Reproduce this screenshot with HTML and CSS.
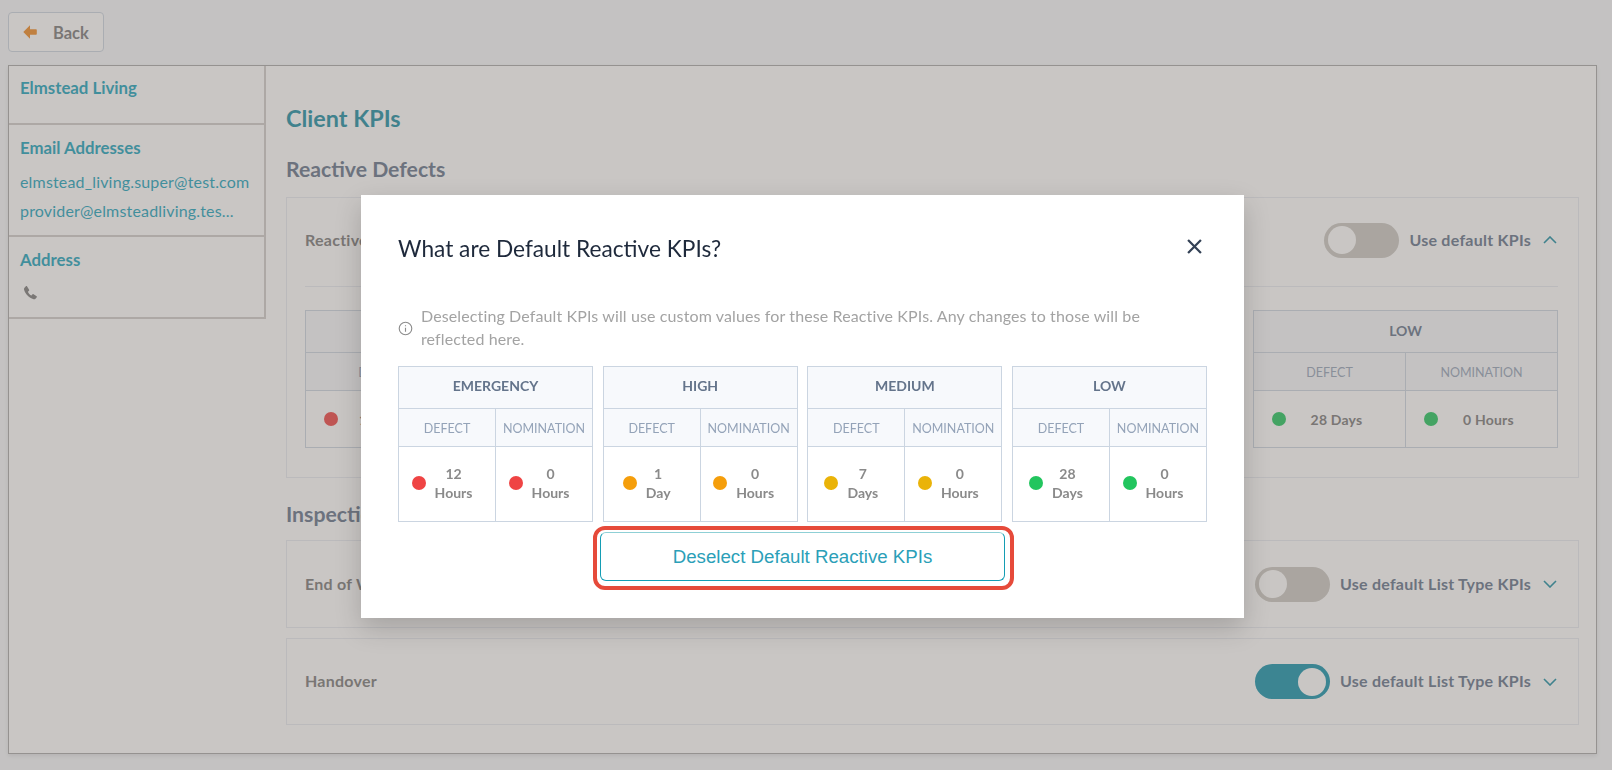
FILE: index.html
```html
<!DOCTYPE html>
<html lang="en">
<head>
<meta charset="utf-8">
<title>Client KPIs</title>
<link rel="stylesheet" href="styles.css">
</head>
<body>
<div class="page">
  <button class="back"><svg class="back-icon" viewBox="0 0 14 14"><path d="M7 0.3 L0.3 7 L7 13.7 V9.8 H12.8 C13.4 9.8 13.8 9.4 13.8 8.8 V5.2 C13.8 4.6 13.4 4.2 12.8 4.2 H7 Z"/></svg><span>Back</span></button>
  <div class="panel">
    <aside class="side">
      <section class="side-sec s1"><h3>Elmstead Living</h3></section>
      <section class="side-sec s2">
        <h3>Email Addresses</h3>
        <a class="mail">elmstead_living.super@test.com</a>
        <a class="mail">provider@elmsteadliving.tes...</a>
      </section>
      <section class="side-sec s3">
        <h3>Address</h3>
        <svg class="phone" viewBox="0 0 24 24"><path d="M6.6 2.2 L9.8 7.4 C10.2 8 10 8.7 9.5 9.2 L7.9 10.6 C8.8 13.3 10.9 15.6 13.5 16.6 L15 15 C15.5 14.5 16.2 14.3 16.9 14.7 L21.8 17.8 C22.4 18.2 22.5 19 22 19.6 L20 21.8 C19.2 22.6 18 22.9 16.9 22.6 C9.6 20.6 3.6 14.5 1.6 7.3 C1.3 6.2 1.6 5 2.4 4.2 L4.6 2.1 C5.2 1.5 6.2 1.6 6.6 2.2 Z"/></svg>
      </section>
    </aside>
    <main class="main">
      <h1>Client KPIs</h1>
      <h2>Reactive Defects</h2>
      <div class="card open">
        <div class="card-head">
          <span class="card-name">Reactive Defects</span>
          <span class="toggle"><i></i></span>
          <span class="use">Use default KPIs</span>
          <svg class="chev" viewBox="0 0 14 8"><path d="M1 7 L7 1 L13 7"/></svg>
        </div>
        <div class="bg-tables">
          <div class="btable"><div class="bt-h">EMERGENCY</div><div class="bt-sub"><span>DEFECT</span><span>NOMINATION</span></div><div class="bt-body"><span><b class="dot red"></b><em>12 Hours</em></span><span><b class="dot red"></b><em>0 Hours</em></span></div></div>
          <div class="btable"><div class="bt-h">HIGH</div><div class="bt-sub"><span>DEFECT</span><span>NOMINATION</span></div><div class="bt-body"><span><b class="dot orange"></b><em>1 Day</em></span><span><b class="dot orange"></b><em>0 Hours</em></span></div></div>
          <div class="btable"><div class="bt-h">MEDIUM</div><div class="bt-sub"><span>DEFECT</span><span>NOMINATION</span></div><div class="bt-body"><span><b class="dot yellow"></b><em>7 Days</em></span><span><b class="dot yellow"></b><em>0 Hours</em></span></div></div>
          <div class="btable"><div class="bt-h">LOW</div><div class="bt-sub"><span>DEFECT</span><span>NOMINATION</span></div><div class="bt-body"><span><b class="dot green"></b><em>28 Days</em></span><span><b class="dot green"></b><em>0 Hours</em></span></div></div>
        </div>
      </div>
      <h2 class="h2b">Inspection Defects</h2>
      <div class="card c2">
        <div class="card-head">
          <span class="card-name">End of Works</span>
          <span class="toggle"><i></i></span>
          <span class="use">Use default List Type KPIs</span>
          <svg class="chev" viewBox="0 0 14 8"><path d="M1 1 L7 7 L13 1"/></svg>
        </div>
      </div>
      <div class="card c3">
        <div class="card-head">
          <span class="card-name">Handover</span>
          <span class="toggle on"><i></i></span>
          <span class="use">Use default List Type KPIs</span>
          <svg class="chev" viewBox="0 0 14 8"><path d="M1 1 L7 7 L13 1"/></svg>
        </div>
      </div>
    </main>
  </div>
</div>

<div class="overlay"></div>
<div class="modal">
  <div class="modal-head">
    <h4>What are Default Reactive KPIs?</h4>
    <svg class="close" viewBox="0 0 14 14"><path d="M1 1 L13 13 M13 1 L1 13"/></svg>
  </div>
  <div class="info">
    <svg class="info-icon" viewBox="0 0 16 16"><circle cx="8" cy="8" r="6.7"/><path d="M8 7.2 V11.4 M8 4.6 V5.6"/></svg>
    <p>Deselecting Default KPIs will use custom values for these Reactive KPIs. Any changes to those will be reflected here.</p>
  </div>
  <div class="tables">
    <div class="mt">
      <div class="mt-h">EMERGENCY</div>
      <div class="mt-sub"><span>DEFECT</span><span>NOMINATION</span></div>
      <div class="mt-body">
        <div class="cell"><b class="dot red"></b><em>12<br>Hours</em></div>
        <div class="cell"><b class="dot red"></b><em>0<br>Hours</em></div>
      </div>
    </div>
    <div class="mt">
      <div class="mt-h">HIGH</div>
      <div class="mt-sub"><span>DEFECT</span><span>NOMINATION</span></div>
      <div class="mt-body">
        <div class="cell"><b class="dot orange"></b><em>1<br>Day</em></div>
        <div class="cell"><b class="dot orange"></b><em>0<br>Hours</em></div>
      </div>
    </div>
    <div class="mt">
      <div class="mt-h">MEDIUM</div>
      <div class="mt-sub"><span>DEFECT</span><span>NOMINATION</span></div>
      <div class="mt-body">
        <div class="cell"><b class="dot yellow"></b><em>7<br>Days</em></div>
        <div class="cell"><b class="dot yellow"></b><em>0<br>Hours</em></div>
      </div>
    </div>
    <div class="mt">
      <div class="mt-h">LOW</div>
      <div class="mt-sub"><span>DEFECT</span><span>NOMINATION</span></div>
      <div class="mt-body">
        <div class="cell"><b class="dot green"></b><em>28<br>Days</em></div>
        <div class="cell"><b class="dot green"></b><em>0<br>Hours</em></div>
      </div>
    </div>
  </div>
  <button class="deselect">Deselect Default Reactive KPIs</button>
</div>
</body>
</html>
```

FILE: styles.css
```css
* { box-sizing: border-box; }
html, body { margin: 0; height: 100%; }
body {
  font-family: "Lato", "Liberation Sans", sans-serif;
  background: #f7f9fc;
  overflow: hidden;
  color: #64748b;
}
.page { padding: 12px 15px 0 8px; height: 770px; }

.back {
  display: flex; align-items: center;
  width: 96px; height: 40px; padding: 1px 0 0 14px;
  background: #fff; border: 1px solid #cbd5e1; border-radius: 4px;
  font: 700 16.5px "Lato", sans-serif; color: #7b7b7b;
  margin-bottom: 13px;
}
.back-icon { width: 14px; height: 14px; margin-top: -1px; fill: #f08a24; margin-right: 16px; }

.panel {
  display: flex; height: 689px;
  background: #fff; border: 1px solid #a8a8a8;
  box-shadow: 0 2px 4px rgba(0,0,0,.1);
}
.side { width: 257px; flex: none; align-self: flex-start; border-right: 2px solid #d0cecc; border-bottom: 2px solid #d0cecc; }
.side-sec { padding: 0 11px; border-bottom: 2px solid #d0cecc; }
.side-sec:last-child { border-bottom: 0; }
.s1 { height: 59px; padding-top: 12px; }
.s2 { height: 112px; padding-top: 13px; }
.s3 { height: 80px; padding-top: 13px; }
.side h3 { margin: 0; font-size: 16.8px; line-height: 20px; font-weight: 700; color: #1ba3bd; }
.mail { display: block; font-size: 16px; line-height: 29px; letter-spacing: .17px; color: #1ba3bd; }
.s2 h3 { margin-bottom: 9px; }
.phone { display: block; width: 15px; height: 15px; margin: 15px 0 0 3px; fill: #7c7c7c; }

.main { flex: 1; padding: 37px 17px 0 20px; min-width: 0; }
.main h1 { margin: 0; font-size: 23.4px; line-height: 30px; font-weight: 700; color: #1b8ea4; }
.main h2 { margin: 23px 0 15px; font-size: 21.2px; line-height: 26px; font-weight: 700; color: #64748b; }
.main .h2b { margin: 23px 0 13px; }

.card { border: 1px solid #e8ecf2; background: #fff; padding: 0 20px 0 18px; }
.open { height: 281px; }
.c2 { height: 88px; margin-bottom: 10px; }
.c3 { height: 87px; }
.card-head { display: flex; align-items: center; height: 86px; }
.open .card-head { height: 89px; padding-bottom: 4px; border-bottom: 1px solid #e8ecf2; }
.c3 .card-head { height: 85px; }
.card-name { flex: 1; margin-bottom: 2px; font-size: 16px; letter-spacing: .25px; font-weight: 700; color: #7b7b7b; }
.toggle { display: flex; align-items: center; width: 75px; height: 35px; padding: 0 4px; border-radius: 18px; background: #cbc8c3; }
.toggle i { display: block; width: 28px; height: 28px; border-radius: 50%; background: #fff; }
.toggle.on { background: #1493ac; justify-content: flex-end; }
.use { margin: 0 12px 2px 10px; font-size: 16px; letter-spacing: .25px; font-weight: 700; color: #64748b; }
.chev { width: 14px; height: 8px; margin-right: 1px; fill: none; stroke: #1b8ea4; stroke-width: 1.6; }

.bg-tables { display: flex; gap: 11px; margin-top: 23px; }
.btable { flex: 1; border: 1px solid #cbd5e1; }
.bt-h { height: 42px; display: flex; align-items: center; justify-content: center; padding-bottom: 3px; background: #f7f9fc; font-size: 14px; font-weight: 700; border-bottom: 1px solid #cbd5e1; }
.bt-sub { height: 38px; display: flex; background: #f7f9fc; border-bottom: 1px solid #cbd5e1; font-size: 12.5px; color: #94a3b8; }
.bt-sub span { flex: 1; display: flex; align-items: center; justify-content: center; padding-top: 1px; }
.bt-sub span + span { border-left: 1px solid #cbd5e1; }
.bt-body { height: 56px; display: flex; }
.bt-body > span { flex: 1; display: flex; align-items: center; padding: 0 18px; }
.bt-body > span + span { border-left: 1px solid #cbd5e1; }
.bt-body em { flex: 1; text-align: center; font-style: normal; font-weight: 700; font-size: 14px; letter-spacing: .2px; color: #7b7b7b; }
.dot { display: block; flex: none; width: 14px; height: 14px; border-radius: 50%; }
.red { background: #ef4444; }
.orange { background: #f59e0b; }
.yellow { background: #eab308; }
.green { background: #22c55e; }

.overlay { position: fixed; inset: 0; background: rgba(120,113,108,.4); }

.modal {
  position: absolute; left: 361px; top: 195px;
  width: 883px; height: 423px;
  padding: 0 37px;
  background: #fff;
  box-shadow: 0 10px 25px rgba(0,0,0,.18);
}
.modal-head { display: flex; justify-content: space-between; align-items: center; height: 104px; padding: 2px 5px 0 0; }
.modal-head h4 { margin: 0; font-size: 22.7px; font-weight: 400; color: #1e293b; }
.close { width: 15px; height: 15px; margin-top: -4px; fill: none; stroke: #334155; stroke-width: 2.1; }
.info { display: flex; align-items: center; height: 56px; margin-bottom: 11px; }
.info-icon { flex: none; width: 15px; height: 15px; margin: 3px 8px 0 0; fill: none; stroke: #8c8c8c; stroke-width: 1.2; }
.info p { margin: 0; max-width: 735px; font-size: 16px; line-height: 23px; letter-spacing: .12px; color: #a3a3a3; }

.tables { display: flex; justify-content: space-between; width: 809px; }
.mt { width: 195px; border: 1px solid #cbd5e1; }
.mt-h { height: 42px; display: flex; align-items: center; justify-content: center; padding-bottom: 4px; background: #f7f9fc; border-bottom: 1px solid #cbd5e1; font-size: 14px; font-weight: 700; color: #64748b; }
.mt-sub { height: 38px; display: flex; background: #f7f9fc; border-bottom: 1px solid #cbd5e1; font-size: 12.5px; color: #94a3b8; }
.mt-sub span { flex: 1; display: flex; align-items: center; justify-content: center; padding-top: 1px; }
.mt-sub span:first-child { flex: none; width: 96px; }
.mt-sub span + span { border-left: 1px solid #cbd5e1; }
.mt-body { height: 74px; display: flex; }
.cell { flex: 1; display: flex; align-items: center; justify-content: center; gap: 9px; padding: 0 10px 2px 0; }
.cell:first-child { flex: none; width: 96px; }
.cell + .cell { border-left: 1px solid #cbd5e1; }
.cell em { text-align: center; font-style: normal; font-size: 14px; line-height: 19px; font-weight: 700; color: #8a8a8a; }

.deselect {
  position: relative;
  display: block; width: 405px; height: 49px;
  margin: 10px auto 0;
  background: #fff;
  border: 1px solid #149db4; border-top-color: #8fd0d6; border-radius: 6px;
  font: 400 18.7px "Liberation Sans", Arial, sans-serif; color: #2b9fb8;
}
.deselect::after {
  content: "";
  position: absolute;
  inset: -7px -10px -10px -8px;
  border: 4px solid #e64a3a; border-radius: 12px;
}
```
